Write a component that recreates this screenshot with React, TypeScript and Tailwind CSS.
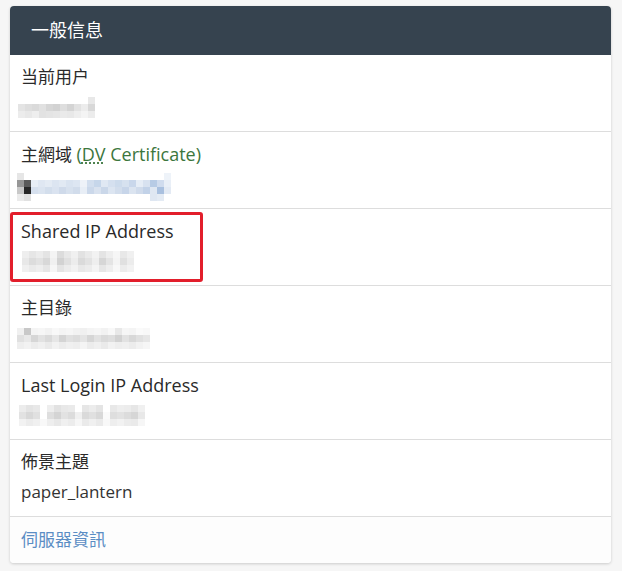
import React from "react";

type Cells = string[][];

// pixelated placeholder for redacted values
const Mosaic = ({cells, size = 7}: { cells: Cells; size?: number }) => (
    <div className="flex flex-col">
        {cells.map((row, r) => (
            <div className="flex" key={r}>
                {row.map((c, i) => (
                    <span key={i} style={{width: size, height: size, background: c}}/>
                ))}
            </div>
        ))}
    </div>
);

const g = (n: number) => `rgb(${n},${n},${n})`;

const userCells: Cells = [
    [g(255), g(255), g(255), g(255), g(255), g(255), g(255), g(255), g(255), g(255), g(232)],
    [g(228), g(222), g(218), g(225), g(214), g(210), g(222), g(212), g(226), g(236), g(216)],
    [g(236), g(232), g(238), g(226), g(228), g(230), g(234), g(232), g(238), g(244), g(236)],
];

const domainCells: Cells = [
    [g(230), "#fff", "#fff", "#fff", "#fff", "#fff", "#fff", "#fff", "#fff", "#fff", "#fff", "#fff", "#fff", "#fff", "#fff", "#fff", "#fff", "#fff", "#fff", "#fff", "#fff", "#eef3f9"],
    [g(150), g(90), "#e8eef6", "#dfe7f2", "#e4ebf4", "#dce5f1", "#e1e9f3", "#d9e3f0", "#dde6f2", "#eef2f8", "#d2deee", "#c6d6ea", "#e0e8f3", "#d5e0ef", "#cddbec", "#d6e1ef", "#c9d7eb", "#e6edf6", "#d8e2f0", "#b7cbe5", "#d0dcee", "#e9eff7"],
    [g(200), g(40), "#d6e0ee", "#dbe4f0", "#d3deec", "#dae3f0", "#cfdaea", "#d7e1ee", "#d1dceb", "#e8eef6", "#cbd8ea", "#d9e2ef", "#cad7e9", "#dce5f1", "#d2ddec", "#c7d5e9", "#dbe4f0", "#d0dbeb", "#c2d2e8", "#dfe7f2", "#a9c0df", "#e3eaf4"],
    [g(235), g(225), "#fff", "#fff", "#fff", "#fff", "#fff", "#fff", "#fff", "#fff", "#fff", "#fff", "#fff", "#fff", "#fff", "#fff", "#fff", "#fff", "#fff", "#dfe7f2", "#e4ebf4", "#fff"],
];

const ipCells: Cells = [
    [g(238), g(230), g(236), g(228), g(244), g(220), g(232), g(240), g(226), g(234), g(242), g(228), g(238), g(246), g(232), g(240)],
    [g(232), g(220), g(226), g(216), g(240), g(210), g(224), g(236), g(218), g(226), g(238), g(214), g(228), g(244), g(224), g(236)],
    [g(240), g(234), g(238), g(230), g(246), g(228), g(236), g(242), g(232), g(236), g(244), g(230), g(238), g(248), g(236), g(242)],
];

const homeCells: Cells = [
    [g(240), g(200), g(244), g(246), g(242), g(248), g(244), g(246), g(242), g(240), g(244), g(246), g(242), g(248), g(232), g(246), g(244), g(250), g(248)],
    [g(224), g(232), g(214), g(226), g(218), g(230), g(212), g(224), g(220), g(228), g(214), g(226), g(218), g(222), g(210), g(226), g(216), g(224), g(230)],
    [g(238), g(242), g(236), g(240), g(234), g(242), g(236), g(240), g(238), g(244), g(236), g(240), g(234), g(242), g(238), g(240), g(236), g(242), g(246)],
];

const lastCells: Cells = [
    [g(236), g(228), g(232), g(255), g(238), g(226), g(232), g(234), g(255), g(230), g(236), g(228), g(255), g(232), g(238), g(236), g(230), g(240)],
    [g(226), g(216), g(224), g(255), g(222), g(212), g(226), g(220), g(240), g(218), g(224), g(216), g(250), g(222), g(226), g(220), g(214), g(232)],
    [g(242), g(236), g(240), g(248), g(238), g(232), g(240), g(236), g(246), g(234), g(240), g(234), g(248), g(238), g(242), g(236), g(234), g(246)],
];

const Row = ({label, children}: { label: React.ReactNode; children: React.ReactNode }) => (
    <div className="flex flex-col gap-[6px] border-b border-[#dddddd] px-[11px] pt-[10px] pb-[12px]">
        <div className="h-[24px] text-[17px] leading-[24px] text-[#2a2a2a]">{label}</div>
        <div className="h-[24px] flex items-center text-[17px] leading-[24px] text-[#333333]">{children}</div>
    </div>
);

export default function App() {
    return (
        <div className="min-h-[571px] bg-[#f6f6f6] pt-[6px] pl-[10px] pr-[11px] font-['Open_Sans','Noto_Sans_CJK_TC',sans-serif]">
            <div className="relative overflow-hidden rounded-[4px] bg-white shadow-[0_1px_3px_rgba(0,0,0,0.18)]">
                <div className="h-[49px] flex items-center bg-[#36434f] px-[21px] text-[18px] text-white">
                    一般信息
                </div>
                <Row label="当前用户">
                    <div className="-ml-[3px]"><Mosaic cells={userCells}/></div>
                </Row>
                <Row label={<span>主網域 <span className="text-[18px] text-[#3c763d]">(<abbr
                    className="underline decoration-dotted underline-offset-2">DV</abbr> Certificate)</span></span>}>
                    <div className="-ml-[4px] mt-[6px]"><Mosaic cells={domainCells}/></div>
                </Row>
                <Row label={<span className="text-[18px]">Shared IP Address</span>}>
                    <div className="ml-[1px]"><Mosaic cells={ipCells}/></div>
                </Row>
                <Row label="主目錄">
                    <div className="-ml-[4px]"><Mosaic cells={homeCells}/></div>
                </Row>
                <Row label={<span className="text-[18px]">Last Login IP Address</span>}>
                    <div className="-ml-[2px]"><Mosaic cells={lastCells}/></div>
                </Row>
                <Row label="佈景主題">
                    paper_lantern
                </Row>
                <div className="bg-[#fdfdfd] px-[11px] py-[11px] text-[17px] leading-[24px] text-[#5b8dc4]">
                    伺服器資訊
                </div>
                <div className="absolute left-0 top-[206px] h-[70px] w-[193px] rounded-[3px] border-[3px] border-[#e21e2b]"/>
            </div>
        </div>
    );
}
